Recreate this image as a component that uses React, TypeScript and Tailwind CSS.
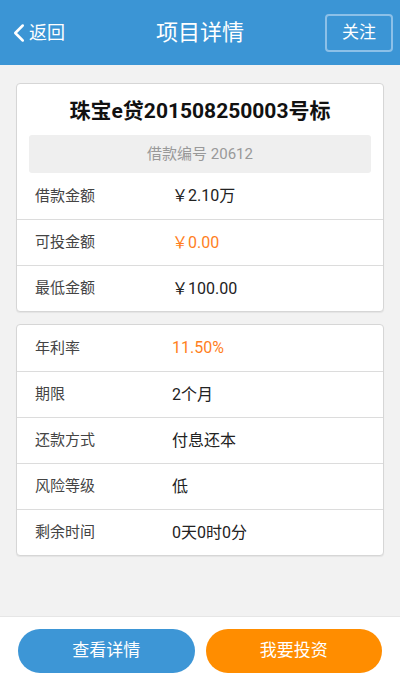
import { ChevronLeft } from 'lucide-react';

const font = { fontFamily: 'Roboto, "Noto Sans CJK SC", sans-serif' };

type Row = { label: string; value: string; accent?: boolean };

const amountRows: Row[] = [
  { label: '借款金额', value: '￥2.10万' },
  { label: '可投金额', value: '￥0.00', accent: true },
  { label: '最低金额', value: '￥100.00' },
];

const termRows: Row[] = [
  { label: '年利率', value: '11.50%', accent: true },
  { label: '期限', value: '2个月' },
  { label: '还款方式', value: '付息还本' },
  { label: '风险等级', value: '低' },
  { label: '剩余时间', value: '0天0时0分' },
];

function InfoRow({ row, first }: { row: Row; first?: boolean }) {
  return (
    <div className={`flex h-[46px] items-center ${first ? '' : 'border-t border-[#dcdcdc]'}`}>
      <span className="w-[155px] pl-[18px] text-[15px] text-[#444]">{row.label}</span>
      <span className={`text-[16px] ${row.accent ? 'text-[#ff7f1e]' : 'text-[#222]'}`}>{row.value}</span>
    </div>
  );
}

export default function App() {
  return (
    <div className="flex h-[685px] w-[400px] flex-col bg-[#f2f2f2]" style={font}>
      <header className="flex h-[65px] shrink-0 items-center justify-between bg-[#3b95d5] text-white">
        <button type="button" className="flex w-[90px] items-center pl-[4px] text-[18px]">
          <ChevronLeft size={30} strokeWidth={2} className="-mr-[5px]" />
          返回
        </button>
        <h1 className="text-[22px]">项目详情</h1>
        <div className="flex w-[90px] justify-end pr-[7px]">
          <button
            type="button"
            className="h-[38px] w-[68px] rounded-[4px] border-2 border-[#8cc0e8] text-[17px]"
          >
            关注
          </button>
        </div>
      </header>

      <main className="flex-1 px-[16px] pt-[18px]">
        <section className="rounded-[4px] border border-[#d6d6d6] bg-white shadow-[0_1px_1px_rgba(0,0,0,0.06)]">
          <h2 className="pt-[13px] pb-[10px] text-center text-[21px] font-bold leading-[28px] text-[#111]">
            珠宝e贷201508250003号标
          </h2>
          <div className="mx-[12px] flex h-[38px] items-center justify-center rounded-[3px] bg-[#efefef] text-[15px] text-[#999]">
            借款编号 20612
          </div>
          {amountRows.map((row, i) => (
            <InfoRow key={row.label} row={row} first={i === 0} />
          ))}
        </section>

        <section className="mt-[12px] rounded-[4px] border border-[#d6d6d6] bg-white shadow-[0_1px_1px_rgba(0,0,0,0.06)]">
          {termRows.map((row, i) => (
            <InfoRow key={row.label} row={row} first={i === 0} />
          ))}
        </section>
      </main>

      <footer className="flex h-[69px] shrink-0 items-start gap-[11px] border-t border-[#e6e6e6] bg-white px-[18px] pt-[12px]">
        <button
          type="button"
          className="h-[44px] flex-1 rounded-full bg-[#3d96d6] text-[17px] text-white"
        >
          查看详情
        </button>
        <button
          type="button"
          className="h-[44px] flex-1 rounded-full bg-[#ff8d00] text-[17px] text-white"
        >
          我要投资
        </button>
      </footer>
    </div>
  );
}
